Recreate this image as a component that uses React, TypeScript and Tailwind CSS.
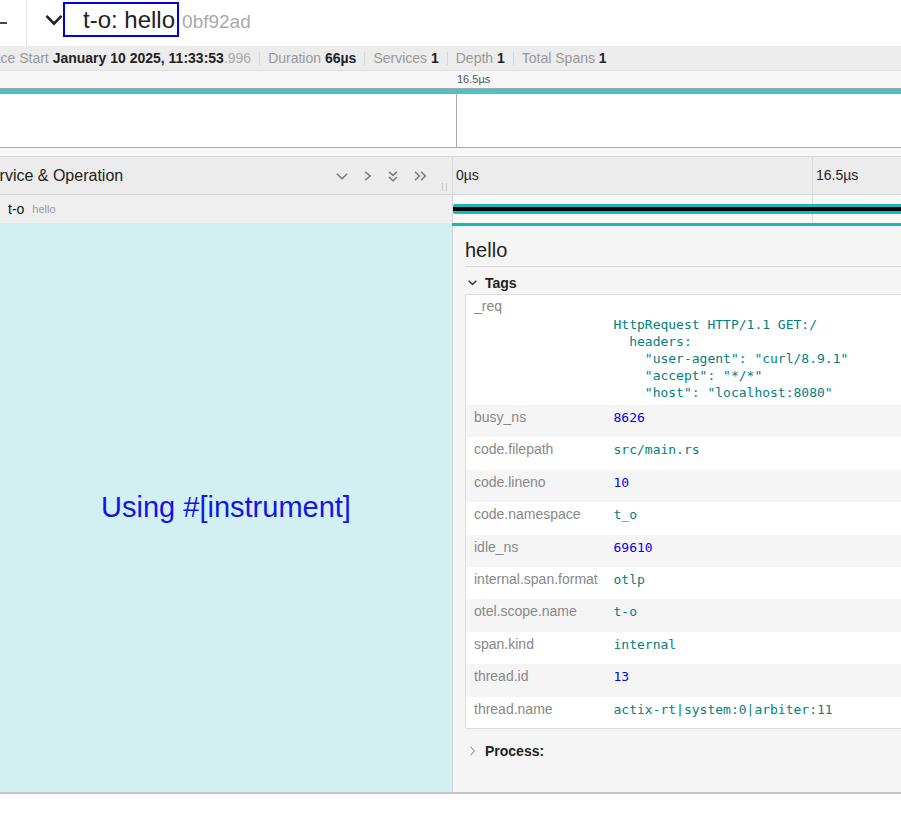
import React from 'react';

const mono = "font-['DejaVu_Sans_Mono',monospace]";

type Tag = { key: string; value: string; num?: boolean };

const tags: Tag[] = [
  { key: 'busy_ns', value: '8626', num: true },
  { key: 'code.filepath', value: 'src/main.rs' },
  { key: 'code.lineno', value: '10', num: true },
  { key: 'code.namespace', value: 't_o' },
  { key: 'idle_ns', value: '69610', num: true },
  { key: 'internal.span.format', value: 'otlp' },
  { key: 'otel.scope.name', value: 't-o' },
  { key: 'span.kind', value: 'internal' },
  { key: 'thread.id', value: '13', num: true },
  { key: 'thread.name', value: 'actix-rt|system:0|arbiter:11' },
];

const reqLines = [
  '',
  'HttpRequest HTTP/1.1 GET:/',
  '  headers:',
  '    "user-agent": "curl/8.9.1"',
  '    "accept": "*/*"',
  '    "host": "localhost:8080"',
];

const Sep = () => <span className="mx-2 h-[13px] w-px bg-[#d6d6d6]" />;

const Stat = ({ label, children }: { label: string; children: React.ReactNode }) => (
  <span className="whitespace-nowrap">
    <span className="text-[#999]">{label}</span>{' '}
    {children}
  </span>
);

const Chevron = ({ points, w, h, color = '#777', sw = 1.5 }: { points: string[]; w: number; h: number; color?: string; sw?: number }) => (
  <svg width={w} height={h} viewBox={`0 0 ${w} ${h}`} fill="none" stroke={color} strokeWidth={sw}>
    {points.map((p, i) => (
      <polyline key={i} points={p} />
    ))}
  </svg>
);

export default function App() {
  return (
    <div className="h-[818px] w-[901px] overflow-hidden bg-white font-['Liberation_Sans',Arial,sans-serif] text-[#222]">
      {/* title bar */}
      <div className="flex h-[46px] items-start">
        <div className="flex h-full w-[27px] items-center border-r border-[#e6e6e6]">
          <div className="h-[2px] w-[7px] bg-[#444]" />
        </div>
        <div className="ml-[18px] mt-[14px]">
          <Chevron w={18} h={12} points={['1.5,1.8 9,9.6 16.5,1.8']} color="#222" sw={2.6} />
        </div>
        <div className="mt-[2px] flex items-baseline">
          <span className="inline-flex h-[35px] items-center border-2 border-[#0000ee] pl-[18px] pr-[2px] text-[24px] leading-none text-[#222]">
            t-o: hello
          </span>
          <span className="ml-[3px] text-[19px] text-[#aaa]">0bf92ad</span>
        </div>
      </div>

      {/* trace summary */}
      <div className="flex h-[25px] items-center border-b border-[#dedede] bg-[#ececec] text-[14px]">
        <div className="-ml-[20px] flex items-center">
          <Stat label="Trace Start">
            <b className="font-bold text-[#222]">January 10 2025, 11:33:53</b>
            <span className="text-[#aaa]">.996</span>
          </Stat>
          <Sep />
          <Stat label="Duration">
            <b className="font-bold text-[#222]">66µs</b>
          </Stat>
          <Sep />
          <Stat label="Services">
            <b className="font-bold text-[#222]">1</b>
          </Stat>
          <Sep />
          <Stat label="Depth">
            <b className="font-bold text-[#222]">1</b>
          </Stat>
          <Sep />
          <Stat label="Total Spans">
            <b className="font-bold text-[#222]">1</b>
          </Stat>
        </div>
      </div>

      {/* minimap ticks */}
      <div className="flex h-[17px] items-center bg-[#f6f6f6] pl-[457px] text-[11px] leading-none text-[#555]">16.5µs</div>
      <div className="border-y border-[#a8a8a8]">
        <div className="h-[5px] bg-[#45c3c6]" />
        <div className="flex h-[53px] bg-white">
          <div className="w-[456px]" />
          <div className="border-l border-[#aaa]" />
        </div>
      </div>
      <div className="h-[8px] bg-[#f7f7f7]" />

      {/* header row */}
      <div className="flex h-[39px] border-y border-[#d5d5d5] bg-[#ececec]">
        <div className="flex w-[453px] items-center border-r border-[#d8d8d8] pt-[1px]">
          <span className="-ml-[20px] flex-1 whitespace-nowrap text-[16px] text-[#222]">Service &amp; Operation</span>
          <Chevron w={12} h={7} points={['0.8,0.8 6,5.8 11.2,0.8']} />
          <span className="ml-[16px]">
            <Chevron w={7} h={10} points={['1,0.8 6,5 1,9.2']} />
          </span>
          <span className="ml-[17px]">
            <Chevron w={10} h={11} points={['1,0.8 5,4.4 9,0.8', '1,6 5,9.8 9,6']} />
          </span>
          <span className="ml-[16px]">
            <Chevron w={13} h={10} points={['1,0.8 5.4,5 1,9.2', '7,0.8 11.4,5 7,9.2']} />
          </span>
          <span className="mb-[3px] ml-[15px] flex h-[8px] gap-[3px] self-end">
            <span className="w-px bg-[#c8c8c8]" />
            <span className="w-px bg-[#c8c8c8]" />
          </span>
          <span className="w-[5px]" />
        </div>
        <div className="flex flex-1 items-center text-[14px] text-[#222]">
          <div className="flex h-full w-[359px] items-center pl-[3px]">0µs</div>
          <div className="flex h-full items-center border-l border-[#d8d8d8] pl-[3px]">16.5µs</div>
        </div>
      </div>

      {/* span row */}
      <div className="flex h-[28px]">
        <div className="flex w-[453px] items-center border-r border-[#d8d8d8] bg-[#efefef] pl-[8px]">
          <span className="text-[14px] text-[#111]">t-o</span>
          <span className="ml-[8px] text-[11px] text-[#999]">hello</span>
        </div>
        <div className="relative flex flex-1 items-center bg-[#f8f8f8]">
          <div className="absolute bottom-0 left-[359px] top-0 border-l border-[#dedede]" />
          <div className="relative flex h-[10px] w-full items-center rounded-l-[2px] bg-[#17b8be]">
            <div className="h-[4px] w-full bg-black" />
          </div>
        </div>
      </div>

      {/* detail row */}
      <div className="flex h-[571px] border-b-2 border-[#c8c8c8]">
        <div className="flex w-[452px] items-center justify-center bg-[#d2f0f2]">
          <span className="text-[29px] text-[#1414e6]">Using #[instrument]</span>
        </div>
        <div className="flex flex-1 flex-col overflow-hidden">
          <div className="h-[3px] bg-[#17b8be]" />
          <div className="flex-1 overflow-hidden border-l border-[#cdd6d7] bg-[#f5f5f5] pl-[12px] pt-[12px]">
            <div className="w-[520px]">
              <div className="border-b border-[#d8d8d8] pb-[4px] text-[20px] leading-[24px] text-[#222]">hello</div>

              <div className="mt-[7px] flex h-[18px] items-center">
                <span className="flex w-[14px] justify-center">
                  <Chevron w={9} h={6} points={['0.7,0.8 4.5,4.6 8.3,0.8']} color="#333" sw={1.4} />
                </span>
                <span className="ml-[6px] text-[14px] font-bold leading-[18px] text-[#222]">Tags</span>
              </div>

              <table className="mt-[2px] w-full table-fixed border-collapse border border-[#ddd] bg-white">
                <colgroup>
                  <col className="w-[140px]" />
                  <col />
                </colgroup>
                <tbody>
                  <tr className="bg-white">
                    <td className="px-2 pt-[3px] align-top text-[14px] leading-[17px] text-[#888]">_req</td>
                    <td className={`px-2 py-[4px] align-top text-[13px] leading-[17px] text-[#008080] ${mono}`}>
                      {reqLines.map((l, i) => (
                        <div key={i} className="h-[17px] whitespace-pre">
                          {l}
                        </div>
                      ))}
                    </td>
                  </tr>
                  {tags.map((t, i) => (
                    <tr key={t.key} className={i % 2 === 0 ? 'bg-[#f5f5f5]' : 'bg-white'}>
                      <td className="h-[32.4px] px-2 pt-[4px] align-top text-[14px] leading-[17px] text-[#888]">{t.key}</td>
                      <td
                        className={`h-[32.4px] px-2 pt-[4px] align-top text-[13px] leading-[17px] ${mono} ${
                          t.num ? 'text-[#0000ff]' : 'text-[#008080]'
                        }`}
                      >
                        {t.value}
                      </td>
                    </tr>
                  ))}
                </tbody>
              </table>

              <div className="mt-[13px] flex h-[18px] items-center">
                <span className="flex w-[14px] justify-center">
                  <Chevron w={5} h={10} points={['0.7,0.8 4.3,5 0.7,9.2']} color="#999" sw={1.1} />
                </span>
                <span className="ml-[6px] text-[14px] font-bold leading-[18px] text-[#222]">Process:</span>
              </div>
            </div>
          </div>
        </div>
      </div>
    </div>
  );
}
